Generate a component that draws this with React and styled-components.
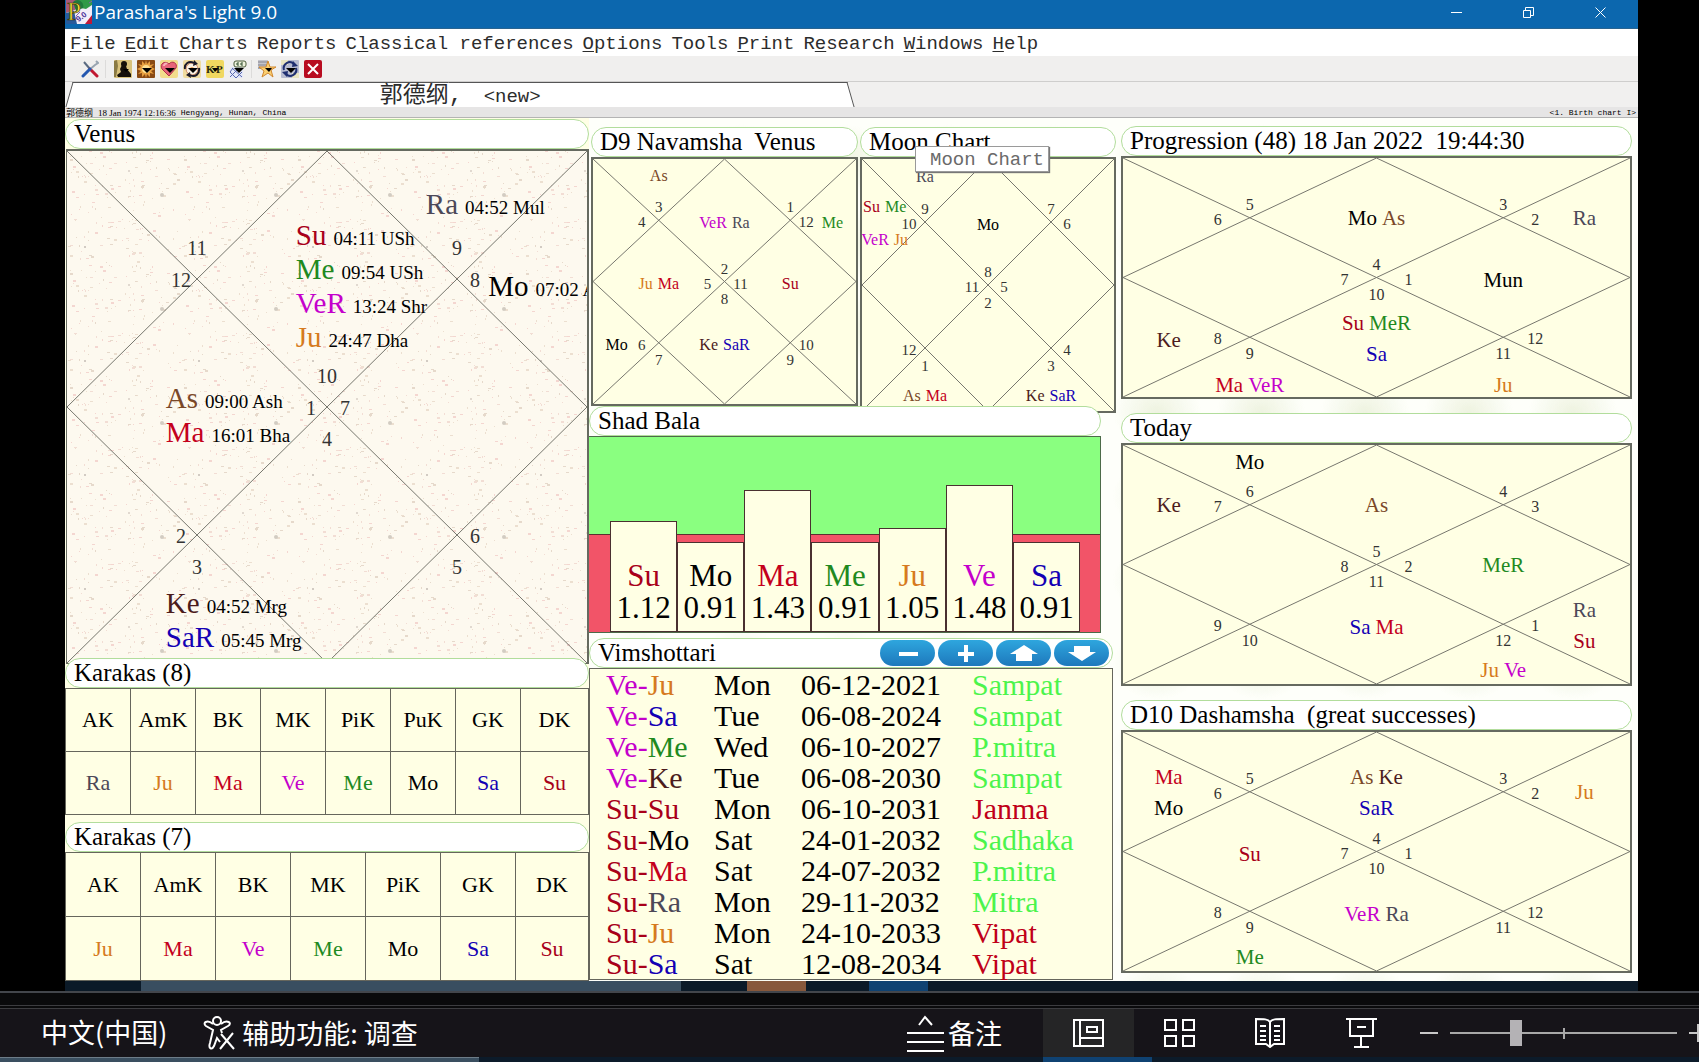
import React, { useState } from "react";
import styled, { createGlobalStyle } from "styled-components";

const serif = `"Liberation Serif", "Noto Sans CJK SC", serif`;
const mono = `"Liberation Mono", "Noto Sans CJK SC", monospace`;
const sans = `"Open Sans", "Noto Sans CJK SC", sans-serif`;

const planetColors = {
  Su: "#a8001a",
  Mo: "#000000",
  Ma: "#c4001c",
  Me: "#1f8a1f",
  Ju: "#d67a20",
  Ve: "#c400cc",
  Sa: "#1400b4",
  Ra: "#4c4858",
  Ke: "#4c1c1c",
  As: "#7a4828",
};

const colorOf = (name) => planetColors[name.slice(0, 2)] || "#000";

const menuItems = [
  ["", "F", "ile"],
  ["", "E", "dit"],
  ["", "C", "harts"],
  ["Reports", "", ""],
  ["C", "l", "assical references"],
  ["", "O", "ptions"],
  ["Tools", "", ""],
  ["", "P", "rint"],
  ["R", "e", "search"],
  ["", "W", "indows"],
  ["", "H", "elp"],
];

// where the sign number of each house sits, house 1 first
const houseSlots = [
  { x: 50, y: 50, side: "up" },
  { x: 25, y: 25, side: "up" },
  { x: 25, y: 25, side: "left" },
  { x: 50, y: 50, side: "left" },
  { x: 25, y: 75, side: "left" },
  { x: 25, y: 75, side: "down" },
  { x: 50, y: 50, side: "down" },
  { x: 75, y: 75, side: "down" },
  { x: 75, y: 75, side: "right" },
  { x: 50, y: 50, side: "right" },
  { x: 75, y: 25, side: "right" },
  { x: 75, y: 25, side: "up" },
];

const birthGroups = [
  { x: 69, y: 7, rows: [["Ra", "04:52 Mul"]] },
  {
    x: 44,
    y: 13,
    rows: [
      ["Su", "04:11 USh"],
      ["Me", "09:54 USh"],
      ["VeR", "13:24 Shr"],
      ["Ju", "24:47 Dha"],
    ],
  },
  { x: 81, y: 23, rows: [["Mo", "07:02 A"]] },
  {
    x: 19,
    y: 45,
    rows: [
      ["As", "09:00 Ash"],
      ["Ma", "16:01 Bha"],
    ],
  },
  {
    x: 19,
    y: 85,
    rows: [
      ["Ke", "04:52 Mrg"],
      ["SaR", "05:45 Mrg"],
    ],
  },
];

const navamsha = [
  { x: 25, y: 7, names: ["As"] },
  { x: 50, y: 26, names: ["VeR", "Ra"] },
  { x: 91, y: 26, names: ["Me"] },
  { x: 25, y: 51, names: ["Ju", "Ma"] },
  { x: 75, y: 51, names: ["Su"] },
  { x: 9, y: 76, names: ["Mo"] },
  { x: 50, y: 76, names: ["Ke", "SaR"] },
];

const moon = [
  { x: 25, y: 7, names: ["Ra"] },
  { x: 9, y: 19, names: ["Su", "Me"] },
  { x: 9, y: 32, names: ["VeR", "Ju"] },
  { x: 50, y: 26, names: ["Mo"] },
  { x: 25, y: 94, names: ["As", "Ma"] },
  { x: 75, y: 94, names: ["Ke", "SaR"] },
];

const sideCharts = [
  {
    title: "Progression (48) 18 Jan 2022  19:44:30",
    first: 4,
    labels: [
      { x: 50, y: 25, names: ["Mo", "As"] },
      { x: 91, y: 25, names: ["Ra"] },
      { x: 75, y: 51, names: ["Mun"] },
      { x: 50, y: 69, names: ["Su", "MeR"] },
      { x: 50, y: 82, names: ["Sa"] },
      { x: 9, y: 76, names: ["Ke"] },
      { x: 25, y: 95, names: ["Ma", "VeR"] },
      { x: 75, y: 95, names: ["Ju"] },
    ],
  },
  {
    title: "Today",
    first: 5,
    labels: [
      { x: 25, y: 7, names: ["Mo"] },
      { x: 9, y: 25, names: ["Ke"] },
      { x: 50, y: 25, names: ["As"] },
      { x: 75, y: 50, names: ["MeR"] },
      { x: 50, y: 76, names: ["Sa", "Ma"] },
      { x: 91, y: 69, names: ["Ra"] },
      { x: 91, y: 82, names: ["Su"] },
      { x: 75, y: 94, names: ["Ju", "Ve"] },
    ],
  },
  {
    title: "D10 Dashamsha  (great successes)",
    first: 4,
    labels: [
      { x: 9, y: 19, names: ["Ma"] },
      { x: 9, y: 32, names: ["Mo"] },
      { x: 50, y: 19, names: ["As", "Ke"] },
      { x: 50, y: 32, names: ["SaR"] },
      { x: 91, y: 25, names: ["Ju"] },
      { x: 25, y: 51, names: ["Su"] },
      { x: 50, y: 76, names: ["VeR", "Ra"] },
      { x: 25, y: 94, names: ["Me"] },
    ],
  },
];

const shadBala = [
  ["Su", 1.12],
  ["Mo", 0.91],
  ["Ma", 1.43],
  ["Me", 0.91],
  ["Ju", 1.05],
  ["Ve", 1.48],
  ["Sa", 0.91],
];

const dashas = [
  ["Ve", "Ju", "Mon", "06-12-2021", "Sampat"],
  ["Ve", "Sa", "Tue", "06-08-2024", "Sampat"],
  ["Ve", "Me", "Wed", "06-10-2027", "P.mitra"],
  ["Ve", "Ke", "Tue", "06-08-2030", "Sampat"],
  ["Su", "Su", "Mon", "06-10-2031", "Janma"],
  ["Su", "Mo", "Sat", "24-01-2032", "Sadhaka"],
  ["Su", "Ma", "Sat", "24-07-2032", "P.mitra"],
  ["Su", "Ra", "Mon", "29-11-2032", "Mitra"],
  ["Su", "Ju", "Mon", "24-10-2033", "Vipat"],
  ["Su", "Sa", "Sat", "12-08-2034", "Vipat"],
];

const karakas8 = {
  head: ["AK", "AmK", "BK", "MK", "PiK", "PuK", "GK", "DK"],
  body: ["Ra", "Ju", "Ma", "Ve", "Me", "Mo", "Sa", "Su"],
};

const karakas7 = {
  head: ["AK", "AmK", "BK", "MK", "PiK", "GK", "DK"],
  body: ["Ju", "Ma", "Ve", "Me", "Mo", "Sa", "Su"],
};

// paper specks for one 114px tile, from a small fixed-seed generator
const specks = (() => {
  let seed = 7;
  const next = () => {
    seed = (seed * 1103515245 + 12345) % 2147483648;
    return seed / 2147483648;
  };
  const tones = ["#f4d6d0", "#ecdfd0", "#f2ddd4", "#e6d9cb"];
  return Array.from({ length: 170 }, () => ({
    x: Math.round(next() * 112),
    y: Math.round(next() * 112),
    w: next() > 0.6 ? 3 : 1,
    h: next() > 0.7 ? 2 : 1,
    fill: tones[Math.floor(next() * 4)],
  }));
})();

const Planet = ({ name, suffix = "" }) => (
  <PlanetName $color={colorOf(name)}>
    {name}
    {suffix}
  </PlanetName>
);

const ChartLines = () => (
  <Lines viewBox="0 0 100 100" preserveAspectRatio="none" aria-hidden="true">
    <path d="M0 0L100 100M100 0L0 100M50 0L100 50L50 100L0 50Z" />
  </Lines>
);

const PaperTexture = () => (
  <Texture aria-hidden="true">
    <defs>
      <pattern id="paper" width="114" height="114" patternUnits="userSpaceOnUse">
        {specks.map((s, i) => (
          <rect key={i} x={s.x} y={s.y} width={s.w} height={s.h} fill={s.fill} />
        ))}
        <circle cx="95" cy="44" r="2" fill="#d2ccc2" />
        <circle cx="18" cy="96" r="1" fill="#c4bcb4" />
        <circle cx="62" cy="20" r="1" fill="#d8cfc6" />
      </pattern>
    </defs>
    <rect width="100%" height="100%" fill="url(#paper)" />
  </Texture>
);

const Chart = ({ first, labels = [], height, size, spread, textured, children }) => (
  <ChartFrame $height={height} $textured={textured}>
    {textured && <PaperTexture />}
    <ChartLines />
    {houseSlots.map((slot, i) => (
      <HouseNumber key={i} $slot={slot} $spread={spread} $size={spread.font}>
        {((first + i - 1) % 12) + 1}
      </HouseNumber>
    ))}
    {labels.map((label) => (
      <ChartLabel
        key={label.names.join("") + label.y}
        $x={label.x}
        $y={label.y}
        $size={size}
      >
        {label.names.map((name) => (
          <Planet key={name} name={name} />
        ))}
      </ChartLabel>
    ))}
    {children}
  </ChartFrame>
);

const KarakaTable = ({ data, rowHeight, col, label }) => (
  <Karakas aria-label={label} $row={rowHeight} $col={col}>
    <thead>
      <tr>
        {data.head.map((h) => (
          <th key={h} scope="col">
            {h}
          </th>
        ))}
      </tr>
    </thead>
    <tbody>
      <tr>
        {data.body.map((p) => (
          <td key={p}>
            <Planet name={p} />
          </td>
        ))}
      </tr>
    </tbody>
  </Karakas>
);

const AppLogo = () => (
  <svg width="26" height="24" viewBox="0 0 26 24" aria-hidden="true">
    <rect width="26" height="24" fill="#f2eef8" />
    <path d="M0 0H14L9 10L0 13Z" fill="#a85a78" />
    <path d="M12 0H26V5L20 9L10 7Z" fill="#2f9a48" />
    <path d="M7 2A6 6 0 0 1 17 8L10 11Z" fill="#1f7a3c" />
    <path d="M0 13L8 11L11 24H0Z" fill="#2a5a9a" />
    <path d="M19 24L26 15V24Z" fill="#c01838" />
    <path d="M10 16L14 12M23 3L26 1" stroke="#8a5ab0" />
    <text x="1" y="20" fontFamily="Liberation Serif" fontSize="25" fill="#f4e23c" stroke="#3a3208" strokeWidth="0.7">
      P
    </text>
    <text x="10" y="19" fontFamily="Liberation Sans" fontWeight="bold" fontSize="8" fill="#4a2f98" transform="rotate(-38 16 17)">
      9.0
    </text>
  </svg>
);

const Arrow = () => <path d="M5 8H15L10 13Z" fill="#000" />;

const toolIcons = [
  {
    label: "Person",
    art: (
      <>
        <rect width="18" height="18" rx="1" fill="#d9c27c" />
        <path d="M0 1L3 0L4 6L2 17H0Z" fill="#8a7a44" />
        <circle cx="10" cy="4" r="3" fill="#15100a" />
        <path d="M8 5L12 6L13 9L17 14V17H4L3 15L7 12L6 9Z" fill="#15100a" />
        <path d="M9 9H15L12 12Z" fill="#000" />
      </>
    ),
  },
  {
    label: "Sun",
    art: (
      <>
        <rect width="18" height="18" rx="1" fill="#8a4a14" />
        <path d="M9 0L10 4L13 1L13 5L17 4L14 7L18 9L14 11L17 14L13 13L13 17L10 14L9 18L8 14L5 17L5 13L1 14L4 11L0 9L4 7L1 4L5 5L5 1L8 4Z" fill="#e8a040" />
        <circle cx="9" cy="9" r="4" fill="#ffe090" />
        <Arrow />
      </>
    ),
  },
  {
    label: "Compatibility",
    art: (
      <>
        <rect width="18" height="18" rx="2" fill="#f2dc8c" />
        <path d="M9 16L2 9C-1 4 5 0 9 4C12 0 18 3 16 8Z" fill="#e8647a" stroke="#b03048" />
        <path d="M4 6C4 4 6 3 7 4" fill="none" stroke="#f8b4bc" strokeWidth="2" />
        <Arrow />
      </>
    ),
  },
  {
    label: "Transits",
    art: (
      <>
        <rect width="18" height="18" rx="2" fill="#f0dca0" />
        <circle cx="9" cy="9" r="6" fill="#fbf2e4" stroke="#d08868" />
        <circle cx="9" cy="9" r="2" fill="#f0a050" />
        <path d="M2 9C1 4 6 0 11 3M16 8C17 14 12 18 7 15" fill="none" stroke="#1c1a28" strokeWidth="2" />
        <path d="M11 0L15 4L10 6ZM7 12L3 15L8 18Z" fill="#1c1a28" />
        <Arrow />
      </>
    ),
  },
  {
    label: "KP",
    art: (
      <>
        <rect width="18" height="18" rx="2" fill="#f0d860" />
        <text x="0" y="13" fontFamily="Liberation Serif" fontWeight="bold" fontSize="11" fill="#2a2a10">
          K
        </text>
        <text x="10" y="13" fontFamily="Liberation Serif" fontWeight="bold" fontSize="11" fill="#2a2a10">
          P
        </text>
        <path d="M6 8H13L9 12Z" fill="#000" />
      </>
    ),
  },
  {
    label: "Glossary",
    art: (
      <>
        <rect x="1" y="7" width="13" height="11" rx="2" fill="#e4e8f8" />
        <path d="M1 12L7 18M3 8L13 17M1 17L9 9M7 18L13 12M1 12L4 8" stroke="#5a68b0" />
        <rect x="5" y="1" width="12" height="6" rx="2" fill="#eef2dc" stroke="#4a5a3a" />
        <path d="M10 3H8V5H10M14 3H12V5H14" fill="none" stroke="#2c4a2c" />
        <path d="M5 8H15L10 13Z" fill="#000" />
      </>
    ),
  },
];

const extraIcons = [
  {
    label: "Favourites",
    art: (
      <>
        <rect x="0" y="0" width="10" height="9" fill="#c4c4cc" />
        <path d="M0 2H10M0 5H9M0 8H7" stroke="#84848e" />
        <path d="M10 1L12 7H18L13 10L15 17L10 13L4 17L6 11L1 7H8Z" fill="#fbcf70" stroke="#d08830" />
        <path d="M7 8H14L11 12Z" fill="#000" />
      </>
    ),
  },
  {
    label: "Recalculate",
    art: (
      <>
        <rect width="18" height="18" rx="1" fill="#b8bcd0" />
        <path d="M0 0H7V5H0ZM11 13H18V18H11Z" fill="#e8e4c0" />
        <path d="M3 10A6 6 0 0 1 13 4M15 8A6 6 0 0 1 5 14" fill="none" stroke="#1f2f70" strokeWidth="2" />
        <path d="M12 1L17 6L11 7ZM6 17L1 12L7 11Z" fill="#1f2f70" />
        <Arrow />
      </>
    ),
  },
  {
    label: "Close chart",
    art: (
      <>
        <rect width="18" height="18" rx="2" fill="#b80c20" />
        <path d="M4 4L14 14M14 4L4 14" stroke="#fff" strokeWidth="2" />
      </>
    ),
  },
];

const ToolIcon = ({ label, art }) => (
  <ToolButton aria-label={label}>
    <svg width="18" height="18" viewBox="0 0 18 18">
      {art}
    </svg>
  </ToolButton>
);

const statusViews = [
  {
    label: "Normal view",
    active: true,
    art: (
      <>
        <path d="M2 2H31V28H2Z" />
        <path d="M8 2V28M8 20H31" />
        <path d="M15 9H25V14H15Z" strokeWidth="3" />
      </>
    ),
  },
  {
    label: "Slide sorter",
    art: <path d="M2 2H13V12H2ZM20 2H31V12H20ZM2 18H13V28H2ZM20 18H31V28H20Z" />,
  },
  {
    label: "Reading view",
    art: (
      <>
        <path d="M16 4C14 1 10 1 2 1V26H12L16 29L20 26H30V1C22 1 18 1 16 4ZM16 4V28" />
        <path d="M6 8H12M6 13H12M6 18H12M6 22H12M20 8H26M20 13H26M20 18H26M20 22H26" />
      </>
    ),
  },
  {
    label: "Slide show",
    art: <path d="M1 1H32M5 1V18H28V1M12 9H21M16 18V29M9 29H24" />,
  },
];

export default function App() {
  const [zoom, setZoom] = useState(28);

  return (
    <>
      <GlobalStyle />
      <Window>
        <TitleBar>
          <AppLogo />
          <AppTitle>Parashara's Light 9.0</AppTitle>
          <WindowButtons>
            <button aria-label="Minimize">
              <svg width="11" height="11" viewBox="0 0 11 11">
                <path d="M0 5.5H11" />
              </svg>
            </button>
            <button aria-label="Restore">
              <svg width="11" height="11" viewBox="0 0 11 11">
                <path d="M0.5 3.5H7.5V10.5H0.5ZM2.5 3V0.5H10.5V8.5H8" />
              </svg>
            </button>
            <button aria-label="Close">
              <svg width="11" height="11" viewBox="0 0 11 11">
                <path d="M0.5 0.5L10.5 10.5M10.5 0.5L0.5 10.5" />
              </svg>
            </button>
          </WindowButtons>
        </TitleBar>

        <MenuBar>
          {menuItems.map(([before, key, after]) => (
            <MenuButton key={before + key + after}>
              {before}
              <u>{key}</u>
              {after}
            </MenuButton>
          ))}
        </MenuBar>

        <Toolbar>
          <ToolGroup>
            <ToolButton aria-label="Preferences">
              <svg width="18" height="18" viewBox="0 0 18 18">
                <path d="M3 2L9 9" stroke="#5a6a80" strokeWidth="2" />
                <path d="M9 9L16 16" stroke="#c01830" strokeWidth="3" strokeLinecap="round" />
                <path d="M15 1L17 3L14 5L8 10" fill="none" stroke="#98a4b0" strokeWidth="2" />
                <path d="M9 9L2 16" stroke="#2458b0" strokeWidth="3" strokeLinecap="round" />
              </svg>
            </ToolButton>
          </ToolGroup>
          <ToolGroup>
            {toolIcons.map((icon) => (
              <ToolIcon key={icon.label} {...icon} />
            ))}
          </ToolGroup>
          <ToolGroup>
            {extraIcons.map((icon) => (
              <ToolIcon key={icon.label} {...icon} />
            ))}
          </ToolGroup>
        </Toolbar>

        <TabStrip>
          <ChartTab>
            <TabOwner>郭德纲,</TabOwner>
            <span>&lt;new&gt;</span>
          </ChartTab>
        </TabStrip>

        <InfoStrip>
          <span>郭德纲</span>
          <BirthTime>18 Jan 1974 12:16:36</BirthTime>
          <InfoMono>Hengyang, Hunan, China</InfoMono>
          <PageName>&lt;1. Birth chart I&gt;</PageName>
        </InfoStrip>

        <Workspace>
          <LeftColumn>
            <Pill>Venus</Pill>
            <Chart
              first={10}
              height={515}
              spread={{ font: 20, left: -16, right: 18, up: -31, down: 32, drop: 1 }}
              textured
            >
              {birthGroups.map((group) => (
                <PlanetList key={group.rows[0][0]} $x={group.x} $y={group.y}>
                  {group.rows.map(([name, degree]) => (
                    <li key={name}>
                      <Planet name={name} />
                      <Degree>{degree}</Degree>
                    </li>
                  ))}
                </PlanetList>
              ))}
            </Chart>
            <Overlap $by={6}>
              <Pill>Karakas (8)</Pill>
              <KarakaTable data={karakas8} rowHeight={63} col="65px" label="Karakas (8)" />
            </Overlap>
            <Spacer />
            <Pill>Karakas (7)</Pill>
            <KarakaTable data={karakas7} rowHeight={64} col="75px" label="Karakas (7)" />
          </LeftColumn>

          <MiddleColumn>
            <ChartPair>
              <div>
                <Pill>D9 Navamsha&nbsp; Venus</Pill>
                <Chart
                  first={2}
                  labels={navamsha}
                  height={249}
                  size={16}
                  spread={{ font: 15, left: -17, right: 16, up: -13, down: 17, drop: 2 }}
                />
              </div>
              <MoonPanel>
                <Pill>Moon Chart</Pill>
                <Chart
                  first={8}
                  labels={moon}
                  height={256}
                  size={16}
                  spread={{ font: 15, left: -16, right: 16, up: -13, down: 18, drop: 2 }}
                />
                <Tooltip role="tooltip">Moon Chart</Tooltip>
              </MoonPanel>
            </ChartPair>

            <ShadBala>
              <Pill>Shad Bala</Pill>
              <BarArea>
                {shadBala.map(([name, value]) => (
                  <Bar key={name} style={{ height: `${value * 99}px` }}>
                    <Planet name={name} />
                    <span>{value.toFixed(2)}</span>
                  </Bar>
                ))}
              </BarArea>
            </ShadBala>

            <Vimshottari>
              <Pill>
                Vimshottari
                <PillButtons>
                  <button aria-label="Less detail">
                    <svg width="22" height="18" viewBox="0 0 22 18">
                      <path d="M2 8H21V12H2Z" />
                    </svg>
                  </button>
                  <button aria-label="More detail">
                    <svg width="22" height="18" viewBox="0 0 22 18">
                      <path d="M3 8H9V1H13V8H19V12H13V18H9V12H3Z" />
                    </svg>
                  </button>
                  <button aria-label="Up">
                    <svg width="28" height="18" viewBox="0 0 28 18">
                      <path d="M14 1L28 10H22V17H6V10H0Z" />
                    </svg>
                  </button>
                  <button aria-label="Down">
                    <svg width="28" height="18" viewBox="0 0 28 18">
                      <path d="M14 17L28 8H22V2H6V8H0Z" />
                    </svg>
                  </button>
                </PillButtons>
              </Pill>
              <DashaTable aria-label="Vimshottari">
                <tbody>
                  {dashas.map(([major, minor, day, date, tara]) => (
                    <tr key={date}>
                      <td>
                        <Planet name={major} suffix="-" />
                        <Planet name={minor} />
                      </td>
                      <td>{day}</td>
                      <td>{date}</td>
                      <Tara $bad={tara === "Janma" || tara === "Vipat"}>{tara}</Tara>
                    </tr>
                  ))}
                </tbody>
              </DashaTable>
            </Vimshottari>
          </MiddleColumn>

          <RightColumn>
            {sideCharts.map((chart) => (
              <div key={chart.title}>
                <Pill>{chart.title}</Pill>
                <Chart
                  first={chart.first}
                  labels={chart.labels}
                  height={243}
                  size={21}
                  spread={{ font: 16, left: -32, right: 32, up: -13, down: 17, drop: 2 }}
                />
              </div>
            ))}
          </RightColumn>
        </Workspace>

        <TaskStrip>
          <TaskChip $left={76} $width={540} $color="#394e60" />
          <TaskChip $left={66} $width={59} $color="#87583c" />
          <TaskChip $left={63} $width={59} $color="#0f4272" />
        </TaskStrip>
      </Window>

      <Divider />
      <StatusBar>
        <StatusText>中文(中国)</StatusText>
        <StatusButton>
          <svg width="33" height="34" viewBox="0 0 33 34" fill="none" stroke="#fff" strokeWidth="2">
            <circle cx="15" cy="5" r="4" />
            <path d="M11 8C5 3 0 7 4 10L11 14L8 27C6 33 10 34 12 30L15 22L18 26M19 8C25 3 31 7 26 10L19 14L20 17" />
            <path d="M19 18L32 33M31 17L18 33" />
          </svg>
          辅助功能: 调查
        </StatusButton>
        <NotesButton>
          <svg width="37" height="38" viewBox="0 0 37 38" fill="none" stroke="#fff" strokeWidth="2">
            <path d="M12 11L18 3L25 11" />
            <path d="M0 19H37M0 28H37M0 37H37" />
          </svg>
          备注
        </NotesButton>
        {statusViews.map((view) => (
          <ViewButton key={view.label} aria-label={view.label} $active={view.active}>
            <svg width="33" height="30" viewBox="0 0 33 30">
              {view.art}
            </svg>
          </ViewButton>
        ))}
        <ZoomOut aria-label="Zoom out">
          <svg width="18" height="20" viewBox="0 0 18 20">
            <path d="M0 10H18" />
          </svg>
        </ZoomOut>
        <ZoomTrack>
          <input
            type="range"
            aria-label="Zoom"
            value={zoom}
            onChange={(e) => setZoom(Number(e.target.value))}
          />
        </ZoomTrack>
        <ZoomIn aria-label="Zoom in">
          <svg width="18" height="20" viewBox="0 0 18 20">
            <path d="M0 10H18M9 1V19" />
          </svg>
        </ZoomIn>
      </StatusBar>
      <BottomStrip>
        <BottomLeft />
        <BottomActive />
      </BottomStrip>
    </>
  );
}

const GlobalStyle = createGlobalStyle`
  * {
    box-sizing: border-box;
  }
  body {
    margin: 0;
    background: #000;
    font-family: ${serif};
    color: #000;
    overflow-x: hidden;
  }
  button {
    border: none;
    background: none;
    padding: 0;
    color: inherit;
    font: inherit;
    cursor: pointer;
  }
  svg {
    display: block;
  }
`;

const Window = styled.main`
  margin: 0 61px 0 65px;
`;

const TitleBar = styled.header`
  display: flex;
  align-items: flex-start;
  height: 29px;
  padding-left: 1px;
  background: #0c67ae;
  border-bottom: 1px solid #2a6490;
`;

const AppTitle = styled.h1`
  margin: 0 auto 0 2px;
  font: 400 19px/25px ${sans};
  color: #fff;
`;

const WindowButtons = styled.div`
  display: flex;
  padding-right: 2px;
  button {
    width: 72px;
    height: 24px;
    display: grid;
    place-items: center;
  }
  path {
    fill: none;
    stroke: #fff;
  }
`;

const MenuBar = styled.nav`
  display: flex;
  gap: 9px;
  height: 27px;
  padding-left: 5px;
  background: #fff;
`;

const MenuButton = styled.button`
  padding-top: 4px;
  font: 19px/23px ${mono};
  color: #2c2c2c;
  white-space: nowrap;
  u {
    text-underline-offset: 2px;
    text-decoration-thickness: 1px;
  }
`;

const Toolbar = styled.div`
  display: flex;
  align-items: center;
  height: 26px;
  padding-left: 4px;
  background: #f0efee;
  border-bottom: 1px solid #cfcecd;
`;

const ToolGroup = styled.div`
  display: flex;
  gap: 5px;
  padding: 0 6px;
  & + & {
    border-left: 1px solid #dcdbda;
  }
  &:first-child {
    padding-left: 12px;
  }
  &:nth-child(2) {
    padding: 0 4px 0 8px;
  }
`;

const ToolButton = styled.button`
  width: 18px;
  height: 18px;
`;

const TabStrip = styled.div`
  height: 25px;
  padding: 0 4px;
  background: #f1f0ef;
`;

const ChartTab = styled.button`
  position: relative;
  z-index: 0;
  display: flex;
  align-items: baseline;
  justify-content: center;
  gap: 21px;
  width: 50%;
  height: 25px;
  padding-top: 2px;
  font: 19px/24px ${mono};
  color: #2c2c2c;
  &::before,
  &::after {
    content: "";
    position: absolute;
    z-index: -1;
    top: 0;
    bottom: 0;
    background: #fff;
    border-top: 1px solid #555;
  }
  &::before {
    left: 0;
    right: 50%;
    border-left: 1px solid #555;
    transform: skewX(-16deg);
  }
  &::after {
    left: 49%;
    right: 0;
    border-right: 1px solid #555;
    transform: skewX(16deg);
  }
`;

const TabOwner = styled.span`
  font-size: 23px;
`;

const InfoStrip = styled.div`
  display: flex;
  align-items: center;
  height: 11px;
  padding: 1px 2px 0 1px;
  background: #e6e5e5;
  border-bottom: 1px solid #b4b4b4;
  font: 9px/10px ${serif};
  white-space: pre;
`;

const BirthTime = styled.span`
  margin: 0 5px;
`;

const InfoMono = styled.span`
  font: 8px/10px ${mono};
`;

const PageName = styled(InfoMono)`
  margin-left: auto;
`;

const Workspace = styled.div`
  display: grid;
  grid-template-columns: 524fr 528fr 521fr;
  background: radial-gradient(ellipse at 50% 50%, #eef3e0 0, rgba(238, 243, 224, 0) 60%) 0 0 / 104px 84px,
    #fefffa;
`;

const LeftColumn = styled.section`
  padding-top: 1px;
  background: #ffffe6;
`;

const MiddleColumn = styled.section`
  padding-top: 9px;
`;

const RightColumn = styled.section`
  display: flex;
  flex-direction: column;
  gap: 14px;
  padding: 8px 6px 0 4px;
`;

const Pill = styled.h2`
  display: flex;
  align-items: center;
  height: 30px;
  margin: 0;
  padding-left: 8px;
  background: #fff;
  border: 1px solid #b2dd9c;
  border-radius: 15px;
  font: 400 25px/28px ${serif};
  white-space: pre;
`;

const ChartFrame = styled.div`
  position: relative;
  height: ${(p) => p.$height}px;
  border: 2px solid #666a60;
  overflow: hidden;
  background: #ffffe4;
  ${(p) =>
    p.$textured &&
    `
    margin-left: 1px;
    border-width: 2px 2px 1px 1px;
    background: #fdf9ef;
  `}
`;

const Texture = styled.svg`
  position: absolute;
  inset: 0;
  width: 100%;
  height: 100%;
`;

const Lines = styled.svg`
  position: relative;
  width: 100%;
  height: 100%;
  path {
    fill: none;
    stroke: #77776e;
    stroke-width: 1px;
    vector-effect: non-scaling-stroke;
  }
`;

const shiftX = ({ $slot, $spread }) =>
  $slot.side === "left" || $slot.side === "right" ? $spread[$slot.side] : 0;
const shiftY = ({ $slot, $spread }) =>
  $slot.side === "up" || $slot.side === "down" ? $spread[$slot.side] : $spread.drop;

const HouseNumber = styled.span`
  position: absolute;
  left: calc(${(p) => p.$slot.x}% + ${shiftX}px);
  top: calc(${(p) => p.$slot.y}% + ${shiftY}px);
  transform: translate(-50%, -50%);
  font-size: ${(p) => p.$size}px;
  line-height: 1;
  color: #333;
`;

const ChartLabel = styled.span`
  position: absolute;
  left: ${(p) => p.$x}%;
  top: ${(p) => p.$y}%;
  transform: translate(-50%, -50%);
  display: flex;
  gap: 5px;
  font-size: ${(p) => p.$size}px;
  line-height: 1;
  white-space: nowrap;
`;

const PlanetName = styled.span`
  color: ${(p) => p.$color};
`;

const PlanetList = styled.ul`
  position: absolute;
  left: ${(p) => p.$x}%;
  top: ${(p) => p.$y}%;
  margin: 0;
  padding: 0;
  list-style: none;
  font-size: 29px;
  line-height: 34px;
  li {
    display: flex;
    align-items: baseline;
    gap: 7px;
    height: 34px;
    white-space: nowrap;
  }
`;

const Degree = styled.span`
  font-size: 19px;
  line-height: 20px;
`;

const Overlap = styled.div`
  position: relative;
  z-index: 1;
  margin-top: -${(p) => p.$by}px;
`;

const Spacer = styled.div`
  height: 7px;
`;

const Karakas = styled.table`
  width: 100%;
  table-layout: fixed;
  border-collapse: collapse;
  background: #ffffe4;
  font-size: 22px;
  th,
  td {
    height: ${(p) => p.$row}px;
    padding: 0;
    border: 1px solid #66665c;
    font-weight: 400;
    text-align: center;
  }
  th:not(:last-child) {
    width: ${(p) => p.$col};
  }
`;

const ChartPair = styled.div`
  display: grid;
  grid-template-columns: 267fr 256fr;
  gap: 2px;
  padding: 0 1px 0 2px;
`;

const MoonPanel = styled.div`
  position: relative;
`;

const Tooltip = styled.div`
  position: absolute;
  z-index: 2;
  top: 19px;
  left: 55px;
  padding: 2px 4px 0 14px;
  background: #fff;
  border: 1px solid #9a9a9a;
  box-shadow: 1px 1px 1px #777;
  font: 19px/22px ${mono};
  color: #6a6a6a;
  white-space: nowrap;
`;

const ShadBala = styled(Overlap).attrs({ $by: 7 })`
  width: 97%;
`;

const BarArea = styled.div`
  display: grid;
  grid-template-columns: repeat(7, 1fr);
  align-items: end;
  height: 197px;
  padding: 0 20px 0 21px;
  border: 1px solid #4c6a48;
  border-left: none;
  background: linear-gradient(#8aff80 97px, #5c3030 97px, #5c3030 98px, #f25468 98px);
`;

const Bar = styled.div`
  display: flex;
  flex-direction: column;
  align-items: center;
  justify-content: flex-end;
  padding-bottom: 7px;
  border: 1px solid #4a3030;
  background: #ffffe4;
  font-size: 31px;
  line-height: 32px;
`;

const Vimshottari = styled.div`
  margin: 5px 4px 0 0;
`;

const PillButtons = styled.div`
  display: flex;
  gap: 3px;
  margin-left: auto;
  padding-right: 3px;
  button {
    display: grid;
    place-items: center;
    width: 55px;
    height: 26px;
    border-radius: 13px;
    background: linear-gradient(#2ea6de, #1e78bc);
  }
  path {
    fill: #fff;
  }
`;

const DashaTable = styled.table`
  width: 100%;
  border: 1px solid #66665c;
  border-spacing: 0;
  table-layout: fixed;
  background: #ffffe4;
  font-size: 30px;
  line-height: 31px;
  td {
    padding: 0;
    white-space: nowrap;
  }
  td:nth-child(1) {
    width: 124px;
    padding-left: 16px;
  }
  td:nth-child(2) {
    width: 87px;
  }
  td:nth-child(3) {
    width: 171px;
  }
`;

const Tara = styled.td`
  color: ${(p) => (p.$bad ? "#c00018" : "#4cf44c")};
`;

const TaskStrip = styled.div`
  display: flex;
  height: 10px;
  background: #0b1a28;
`;

const TaskChip = styled.div`
  margin-left: ${(p) => p.$left}px;
  width: ${(p) => p.$width}px;
  background: ${(p) => p.$color};
`;

const Divider = styled.div`
  height: 18px;
  background: #0a0a0c;
  border-top: 2px solid #43464c;
  border-bottom: 4px double #3c3c40;
`;

const StatusBar = styled.footer`
  display: flex;
  align-items: stretch;
  height: 48px;
  padding-left: 41px;
  background: #161419;
  color: #fff;
  font: 27px/46px "Noto Sans CJK SC", sans-serif;
  white-space: nowrap;
  overflow: hidden;
`;

const StatusText = styled.span`
  margin-right: 35px;
`;

const StatusButton = styled.button`
  display: flex;
  align-items: center;
  gap: 7px;
`;

const NotesButton = styled(StatusButton)`
  gap: 4px;
  margin: 0 41px 0 auto;
`;

const ViewButton = styled.button`
  display: grid;
  place-items: center;
  width: 91px;
  background: ${(p) => (p.$active ? "#252526" : "transparent")};
  path {
    fill: none;
    stroke: #fff;
    stroke-width: 2px;
  }
`;

const ZoomButton = styled.button`
  display: grid;
  place-items: center;
  flex: none;
  width: 18px;
  path {
    stroke: #c8c8c8;
    stroke-width: 2px;
  }
`;

const ZoomOut = styled(ZoomButton)`
  margin-left: 13px;
`;

const ZoomIn = styled(ZoomButton)`
  margin-right: -8px;
`;

const ZoomTrack = styled.label`
  display: grid;
  align-items: center;
  width: 227px;
  margin: 0 12px;
  background: linear-gradient(#a8a8a8, #a8a8a8) center / 2px 11px no-repeat;
  input {
    appearance: none;
    width: 100%;
    height: 26px;
    margin: 0;
    background: linear-gradient(#a8a8a8, #a8a8a8) center / 100% 2px no-repeat;
  }
  input::-webkit-slider-thumb {
    appearance: none;
    width: 12px;
    height: 26px;
    background: #b4b2b5;
  }
`;

const BottomStrip = styled.div`
  display: flex;
  justify-content: space-between;
  height: 5px;
  padding-right: 547px;
  background: #0c1b2a;
`;

const BottomLeft = styled.div`
  width: 479px;
  background: #3a4f60;
  border-top: 1px solid #6d7c88;
`;

const BottomActive = styled.div`
  width: 109px;
  background: #0f4272;
`;
